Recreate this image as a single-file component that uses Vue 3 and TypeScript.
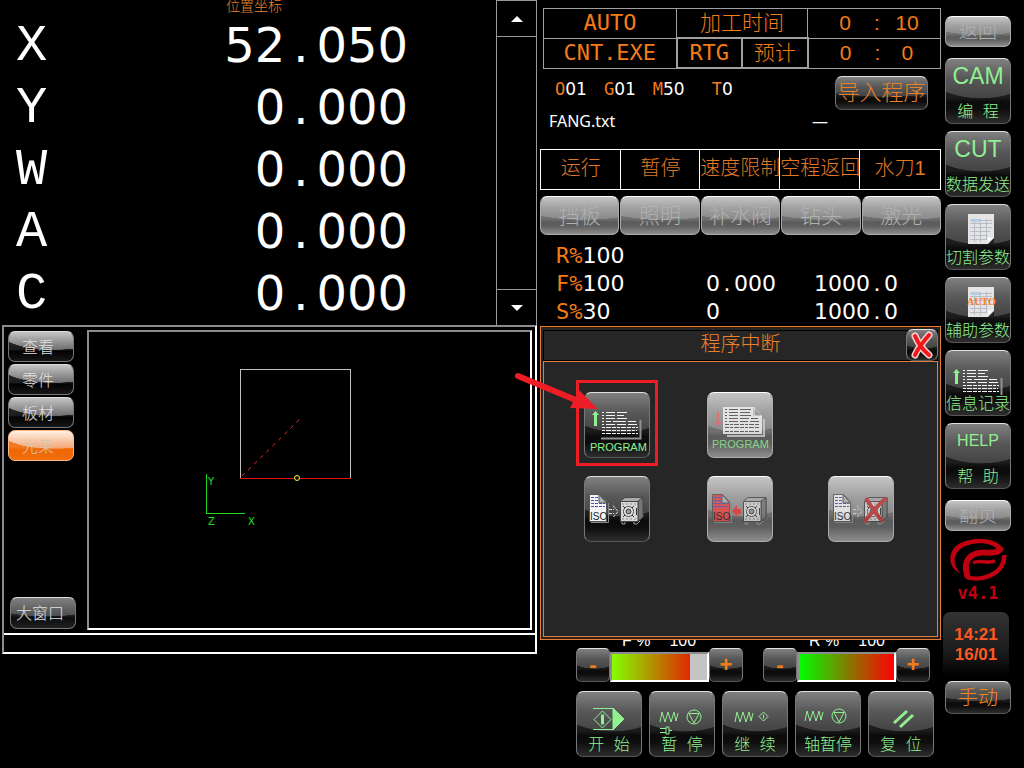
<script setup lang="ts">
interface Axis { name: string; whole: string; frac: string }
interface SideKey { id: string; label: string; title?: string; icon?: string }

const axes: Axis[] = [
  { name: 'X', whole: '52', frac: '050' },
  { name: 'Y', whole: '0', frac: '000' },
  { name: 'W', whole: '0', frac: '000' },
  { name: 'A', whole: '0', frac: '000' },
  { name: 'C', whole: '0', frac: '000' },
]

const codes = [
  { letter: 'O', value: '01' },
  { letter: 'G', value: '01' },
  { letter: 'M', value: '50' },
  { letter: 'T', value: '0' },
]

const states = ['运行', '暂停', '速度限制', '空程返回', '水刀1']
const outputs = ['挡板', '照明', '补水阀', '钻头', '激光']

const rates = [
  { key: 'R%', value: '100', actual: [] as string[], target: [] as string[] },
  { key: 'F%', value: '100', actual: ['0', '000'], target: ['1000', '0'] },
  { key: 'S%', value: '30', actual: ['0'], target: ['1000', '0'] },
]

const tabs = ['查看', '零件', '板材', '光束']
const activeTab = '光束'

const sideTop: SideKey[] = [
  { id: 'cam', label: '编 程', title: 'CAM' },
  { id: 'cut', label: '数据发送', title: 'CUT' },
  { id: 'cutpar', label: '切割参数', icon: 'sheet' },
  { id: 'auxpar', label: '辅助参数', icon: 'auto' },
  { id: 'log', label: '信息记录', icon: 'list' },
  { id: 'help', label: '帮 助', title: 'HELP' },
]

const overrides = [
  { key: 'F %', value: '100', fill: 82, tone: 'feed' },
  { key: 'R %', value: '100', fill: 100, tone: 'rapid' },
]

const actions = [
  { id: 'start', label: '开 始' },
  { id: 'pause', label: '暂 停' },
  { id: 'resume', label: '继 续' },
  { id: 'axis', label: '轴暂停' },
  { id: 'reset', label: '复 位' },
]

const isoKeys = [
  { id: 'store', disabled: false },
  { id: 'fetch', disabled: true },
  { id: 'erase', disabled: true },
]
</script>

<template>
  <main class="screen">
    <section class="left">
      <div class="position">
        <div class="readout">
          <h2>位置坐标</h2>
          <dl>
            <div v-for="a in axes" :key="a.name" class="axis">
              <dt>{{ a.name }}</dt>
              <dd>{{ a.whole }}<span class="point">.</span>{{ a.frac }}</dd>
            </div>
          </dl>
        </div>
        <div class="scroller">
          <button type="button" aria-label="上">
            <svg width="14" height="8"><path d="M7 1L13 7H1Z" fill="#fff" /></svg>
          </button>
          <div class="track"></div>
          <button type="button" aria-label="下">
            <svg width="14" height="8"><path d="M1 1H13L7 7Z" fill="#fff" /></svg>
          </button>
        </div>
      </div>

      <div class="cad">
        <div class="cad-main">
          <nav class="tabs">
            <button v-for="t in tabs" :key="t" type="button" class="tab" :class="{ active: t === activeTab }">{{ t }}</button>
            <button type="button" class="tab big">大窗口</button>
          </nav>
          <svg class="plot" width="100%" height="100%">
            <g fill="none" shape-rendering="crispEdges">
              <path d="M151.500 146V37.500H261.500V146" stroke="#c0c0c0" />
              <path d="M151 146.500H262" stroke="#e01010" />
              <path d="M117.500 142V181.500H156" stroke="#20d820" />
            </g>
            <path d="M153 144L211 87" fill="none" stroke="#d83020" stroke-dasharray="4 4.500" />
            <circle cx="208" cy="146" r="2.500" fill="#111" stroke="#f0f040" />
            <g class="axis-names">
              <text x="119" y="153">Y</text>
              <text x="119" y="193">Z</text>
              <text x="159" y="193">X</text>
            </g>
          </svg>
        </div>
        <div class="cad-status"></div>
      </div>
    </section>

    <section class="middle">
      <table class="info">
        <colgroup><col class="wide" /><col /><col /><col class="wide" /></colgroup>
        <tbody>
          <tr>
            <td class="mono">AUTO</td>
            <td colspan="2">加工时间</td>
            <td><div class="clock"><span>0</span><span>:</span><span>10</span></div></td>
          </tr>
          <tr>
            <td class="mono">CNT.EXE</td>
            <td class="mono thick">RTG</td>
            <td class="thick">预计</td>
            <td><div class="clock"><span>0</span><span>:</span><span>0</span></div></td>
          </tr>
        </tbody>
      </table>

      <div class="codes">
        <div class="code-list">
          <span v-for="c in codes" :key="c.letter"><b>{{ c.letter }}</b>{{ c.value }}</span>
        </div>
        <button type="button" class="key import">导入程序</button>
      </div>
      <div class="file"><span>FANG.txt</span><span>—</span></div>

      <ul class="states">
        <li v-for="s in states" :key="s">{{ s }}</li>
      </ul>
      <div class="outputs">
        <button v-for="o in outputs" :key="o" type="button" class="key off" disabled>{{ o }}</button>
      </div>

      <table class="rates">
        <tbody>
          <tr v-for="r in rates" :key="r.key">
            <th scope="row"><b>{{ r.key }}</b>{{ r.value }}</th>
            <td><template v-for="(p, i) in r.actual" :key="i"><span v-if="i" class="point">.</span>{{ p }}</template></td>
            <td><template v-for="(p, i) in r.target" :key="i"><span v-if="i" class="point">.</span>{{ p }}</template></td>
          </tr>
        </tbody>
      </table>

      <div class="dialog">
        <header>
          <h1>程序中断</h1>
          <button type="button" class="key close" aria-label="关闭">
            <svg width="30" height="30" viewBox="0 0 30 30" fill="none" stroke-linecap="round">
              <path d="M8 6C11 13 16 20 22 25M22 5C16 12 11 18 8 25" stroke="#f6cccc" stroke-width="7" />
              <path d="M8 6C11 13 16 20 22 25M22 5C16 12 11 18 8 25" stroke="#f01818" stroke-width="4" />
            </svg>
          </button>
        </header>
        <div class="dialog-body">
          <div class="marked">
            <button type="button" class="key tile">
              <svg class="icon" viewBox="0 0 64 64">
                <path d="M9 33V22H7l3.500-4 3.500 4h-2V33Z" fill="#90f090" />
                <path d="M16 45.500H55.500V27" fill="none" stroke="#909090" stroke-width="2" />
                <g stroke="#f4f4f4" fill="none" shape-rendering="crispEdges">
                  <path d="M17 19.500h2m2 0h9m2 0h10M17 22.500h2m2 0h9m2 0h7M17 25.500h2m2 0h9m2 0h10M17 28.500h2m2 0h5m2 0h13m2 0h8M17 31.500h2m2 0h9m2 0h9m2 0h9" />
                  <path d="M17 34.500h36M17 37.500h35M17 40.500h36" stroke-dasharray="3 1 5 1 4 1" />
                </g>
                <text x="5" y="58" class="program">PROGRAM</text>
              </svg>
            </button>
            <svg class="pointer" width="90" height="50" viewBox="0 0 90 50">
              <path d="M5 8L70 35" stroke="#ee1c24" stroke-width="6" stroke-linecap="round" />
              <path d="M66 22L85 41L57 40Z" fill="#ee1c24" />
            </svg>
          </div>
          <button type="button" class="key tile off" disabled>
            <svg class="icon" viewBox="0 0 64 64">
              <path d="M9 19h2V29h3l-4 4-4-4h3Z" fill="#f06868" />
              <path d="M19 43H56V26" fill="none" stroke="#d0d0d0" stroke-width="2" />
              <path d="M15 14H46L54 23V41H15Z" fill="#f4f4f4" />
              <path d="M45 14V23H54Z" fill="#9a9a9a" />
              <path d="M46 14V23H54" fill="none" stroke="#fff" />
              <g stroke="#555" fill="none" shape-rendering="crispEdges">
                <path d="M17 16.500h2m2 0h9m2 0h11M17 19.500h2m2 0h9m2 0h10M17 22.500h2m2 0h9m2 0h11M17 25.500h2m2 0h9m2 0h9m2 0h7M17 28.500h2m2 0h9m2 0h8m2 0h9" />
                <path d="M17 31.500h35M17 34.500h35M17 38.500h35" stroke-dasharray="4 1 3 1 5 1" />
              </g>
              <text x="4" y="55" class="program">PROGRAM</text>
            </svg>
          </button>
          <span class="blank"></span>
          <button v-for="k in isoKeys" :key="k.id" type="button" class="key tile" :class="{ off: k.disabled }" :disabled="k.disabled">
            <svg class="icon" viewBox="0 0 64 64" :class="k.id">
              <path d="M6 45.500H23.500V26" fill="none" stroke="#888" />
              <path class="page" d="M4.500 17.500H14.500L21.500 25V44.500H4.500Z" stroke="#555" />
              <path d="M14 17.500V26H21.500Z" fill="#b4b4b4" stroke="#555" />
              <path d="M6 20.500h7M6 23.500h7M6 26.500h14M6 29.500h14" stroke="#5050a8" stroke-dasharray="3 1" />
              <text x="5" y="43" class="iso">ISO</text>
              <path v-if="k.id === 'fetch'" d="M24 34L29 28V32H33V37H29V40Z" fill="#e83838" />
              <path v-else d="M24 32.500h5M24 36.500h5M28 28.500l5 6-5 6" fill="none" stroke="#ddd" stroke-dasharray="3 1" />
              <path d="M37 45v2h3v-2M49 45v2h3l3-3" fill="none" stroke="#999" />
              <path d="M35.500 24L40 20.500H58V40L53 44Z" fill="#aaa" stroke="#4a4a4a" />
              <path d="M53 24L58 20.500V40L53 44Z" fill="#777" stroke="#444" />
              <path d="M35.500 24.500H53V44.500H35.500Z" fill="#d6d6d6" stroke="#444" />
              <path d="M37.500 27h14M37.500 42h14" stroke="#444" stroke-dasharray="1 3" />
              <circle cx="43.500" cy="34.500" r="5" fill="#eee" stroke="#444" />
              <circle cx="43.500" cy="34.500" r="2.500" fill="#999" stroke="#333" />
              <path d="M38 29l2 2M49 29l-2 2M38 40l2-2M49 40l-2-2M51.500 31v7" stroke="#333" />
              <path v-if="k.id === 'erase'" d="M37 21C42 30 49 39 53 44M57 21C48 29 40 39 35 45" fill="none" stroke="#c03838" stroke-width="4" />
            </svg>
          </button>
        </div>
      </div>

      <div class="overrides">
        <div v-for="o in overrides" :key="o.key" class="override">
          <div class="override-name"><span>{{ o.key }}</span><span>{{ o.value }}</span></div>
          <div class="override-row">
            <button type="button" class="key step">-</button>
            <div class="meter"><div :class="o.tone" :style="{ width: o.fill + '%' }"></div></div>
            <button type="button" class="key step">+</button>
          </div>
        </div>
      </div>

      <div class="actions">
        <button v-for="a in actions" :key="a.id" type="button" class="key tile">
          <svg class="icon green" viewBox="0 0 64 64">
            <template v-if="a.id === 'start'">
              <path d="M16 16.500H36M16 37.500H36" />
              <path d="M36 16L47 27L36 38Z" fill="#90f090" />
              <path d="M25.500 19L34 27.500L25.500 36L17 27.500Z" />
              <path d="M24 22.500h3v10h-3Z" fill="#90f090" stroke="none" />
            </template>
            <template v-else-if="a.id === 'pause'">
              <path d="M10 30L12 20L15 30L18 20L21 30L24 20L26 29L28 21" />
              <circle cx="44" cy="25" r="7" /><path d="M39 21.500H49L44 31Z" />
              <path d="M10 36.500h6M10 40.500h6M16 35v7h3v-7ZM19 38.500h3" />
            </template>
            <template v-else-if="a.id === 'resume'">
              <path d="M12 30L14 20L17 30L20 20L23 30L26 20L28 29L30 21" />
              <path d="M40.500 20L45 24.500L40.500 29L36 24.500ZM40.500 22.500v4" />
            </template>
            <template v-else-if="a.id === 'axis'">
              <path d="M9 29L11 19L14 29L17 19L20 29L23 19L25 28L27 20" />
              <circle cx="43" cy="24" r="7" /><path d="M38 20.500H48L43 30Z" />
            </template>
            <path v-else d="M25 31L38 19M31 35L44 23" stroke-width="3" />
          </svg>
          <span class="label">{{ a.label }}</span>
        </button>
      </div>
    </section>

    <aside class="side">
      <button type="button" class="key flat off" disabled>返回</button>
      <div class="side-keys">
        <button v-for="s in sideTop" :key="s.id" type="button" class="key tile" :class="s.id">
          <span v-if="s.title" class="title">{{ s.title }}</span>
          <svg v-else-if="s.icon === 'list'" class="icon" viewBox="0 0 64 64">
            <path d="M9 33V22H7l3.500-4 3.500 4h-2V33Z" fill="#90f090" />
            <path d="M55.500 27V44" fill="none" stroke="#909090" stroke-width="2" />
            <g stroke="#f4f4f4" fill="none" shape-rendering="crispEdges">
              <path d="M17 19.500h2m2 0h9m2 0h10M17 22.500h2m2 0h9m2 0h7M17 25.500h2m2 0h9m2 0h10M17 28.500h2m2 0h5m2 0h13m2 0h8M17 31.500h2m2 0h9m2 0h9m2 0h9" />
              <path d="M17 34.500h36M17 37.500h35M17 40.500h36" stroke-dasharray="3 1 5 1 4 1" />
            </g>
          </svg>
          <svg v-else class="icon" viewBox="0 0 64 64">
            <path d="M22 9H48V34L43 39H22Z" fill="#e4e4e4" />
            <path d="M24 15.500H46M24 18.500H46M24 22.500H46M24 26.500H44M24 30.500H42M24 34.500H41M28.500 14V37M34.500 14V37M40.500 14V34" stroke="#b8bcc4" fill="none" />
            <path d="M25 14h9v3h-9Z" fill="#b4cce8" />
            <path d="M48 31L40 39C43 36 42 34 42 32C44 33 46 33 48 31Z" fill="#fff" />
            <path d="M48 33V39H42Z" fill="#222" />
            <text v-if="s.icon === 'auto'" x="21" y="27" class="auto">AUTO</text>
          </svg>
          <span class="label">{{ s.label }}</span>
        </button>
      </div>
      <button type="button" class="key flat off" disabled>翻页</button>
      <div class="brand">
        <svg width="58" height="44" viewBox="14 12 174 132" fill="none" stroke="#c00010">
          <path d="M48 120C6 104 8 46 54 28C96 10 156 14 178 48L162 52C144 28 98 24 62 40C22 58 24 98 48 120Z" fill="#c00010" stroke="none" />
          <path d="M70 132C60 100 62 76 90 64C112 54 128 62 150 58C162 56 168 52 170 44" stroke-width="18" />
          <path d="M66 132C110 146 180 126 180 66" stroke-width="13" />
          <path d="M86 90C108 78 122 94 152 84" stroke-width="11" />
        </svg>
        <span>v4.1</span>
      </div>
      <div class="time"><span>14:21</span><span>16/01</span></div>
      <button type="button" class="key flat manual">手动</button>
    </aside>
  </main>
</template>

<style>
body {
  margin: 0;
  background: #000;
}
</style>

<style scoped>
.screen {
  display: grid;
  grid-template-columns: minmax(0, 1fr) 401px 83px;
  align-items: start;
  min-height: 100vh;
  background: #000;
  color: #fff;
  font-family: "Liberation Sans", "Noto Sans CJK SC", sans-serif;
  font-weight: 300;
}
h1, h2, dl, dd, ul { margin: 0; padding: 0; font-weight: 300; }
button { margin: 0; padding: 0; font: inherit; color: inherit; }
svg { display: block; }
.left { padding-right: 3px; }
.point { display: inline-block; text-align: center; }

.position { display: flex; height: 325px; }
.readout { flex: 1; padding: 0 88px 0 16px; }
.readout h2 {
  padding-left: 84px;
  text-align: center;
  font-size: 14px;
  line-height: 13px;
  color: #e8842c;
}
.axis {
  display: flex;
  justify-content: space-between;
  height: 62px;
  line-height: 64px;
  font-weight: 400;
}
.axis dt { font-family: "Liberation Mono", monospace; font-size: 52px; line-height: 68px; }
.axis dd { font-family: "DejaVu Sans", sans-serif; font-size: 48px; font-weight: 400; }
.axis .point { width: 31px; }
.scroller {
  display: flex;
  flex-direction: column;
  width: 39px;
  border: 1px solid #999;
  border-bottom: 0;
}
.scroller button {
  display: flex;
  align-items: center;
  justify-content: center;
  height: 35px;
  background: #000;
  border: 0;
}
.track { flex: 1; border: 1px solid #999; border-width: 1px 0; }

.cad {
  margin-left: 2px;
  border: 2px solid;
  border-color: #8c8c8c #fff #fff #8c8c8c;
}
.cad-main {
  display: flex;
  height: 300px;
  padding: 3px 3px 3px 4px;
  border-bottom: 2px solid #fff;
}
.cad-status { height: 17px; }
.tabs { display: flex; flex-direction: column; gap: 2px; width: 79px; padding: 1px 0; }
.tab {
  width: 66px;
  height: 31px;
  padding: 0 6px 2px 0;
  border: 1px solid #777;
  border-top-color: #ddd;
  border-radius: 7px;
  font-size: 16px;
  color: #e0e0e0;
  background:
    radial-gradient(ellipse 85% 62% at 70% 0, transparent 98%, rgba(0, 0, 0, 0.75) 100%),
    linear-gradient(#c4c4c4, #707070 60%, #0a0a0a 66%, #555);
}
.tab.active {
  border-color: #f8b888;
  color: #d8c8b0;
  background:
    radial-gradient(ellipse 85% 62% at 70% 0, transparent 98%, rgba(240, 100, 0, 0.75) 100%),
    linear-gradient(#fff0e4, #f4a878 58%, #f07010 64%, #f88830);
}
.tab.big {
  margin: auto 0 0 2px;
  height: 32px;
  background:
    radial-gradient(ellipse 100% 62% at 55% 0, transparent 98%, rgba(0, 0, 0, 0.6) 100%),
    linear-gradient(#808080, #505050 58%, #1c1c1c 66%, #555);
}
.plot {
  flex: 1;
  min-width: 0;
  box-sizing: border-box;
  border: 2px solid;
  border-color: #8c8c8c #fff #fff #8c8c8c;
}
.axis-names { fill: #20e020; font: 10px "DejaVu Sans", sans-serif; }

.key {
  border: 1px solid #777;
  border-top-color: #e0e0e0;
  border-bottom-color: #555;
  border-radius: 7px;
  background:
    radial-gradient(ellipse 100% 62% at 55% 0, transparent 98%, rgba(0, 0, 0, 0.6) 100%),
    linear-gradient(#808080, #585858 30%, #444 60%, #1c1c1c 68%, #202020 78%, #707070);
}
.key.off {
  border-color: #aaa;
  border-top-color: #fff;
  background:
    radial-gradient(ellipse 100% 62% at 55% 0, transparent 98%, rgba(0, 0, 0, 0.2) 100%),
    linear-gradient(#c4c4c4, #a0a0a0 30%, #8a8a8a 60%, #727272 68%, #767676 78%, #b0b0b0);
  color: #b0b0b0;
}
.tile { display: grid; width: 66px; height: 66px; }
.tile > * { grid-area: 1 / 1; }
.icon { width: 64px; height: 64px; }
.label {
  align-self: end;
  justify-self: center;
  font-family: "Liberation Mono", "Noto Sans CJK SC", sans-serif;
  font-size: 16px;
  line-height: 20px;
  white-space: nowrap;
  color: #90f090;
}

.middle { padding-top: 8px; }
.info {
  width: 398px;
  margin-left: 3px;
  table-layout: fixed;
  border-collapse: collapse;
  text-align: center;
  font-size: 21px;
  color: #f47c18;
}
.info .wide { width: 133px; }
.info td { height: 28px; padding: 0; border: 1px solid #a0a0a0; line-height: 28px; }
.info .thick { border-width: 2px; }
.mono { font-family: "DejaVu Sans Mono", monospace; font-size: 22px; font-weight: 400; }
.clock { display: grid; grid-template-columns: 58px 6px 1fr; padding: 0 6px 0 8px; }

.codes { display: flex; justify-content: space-between; padding: 7px 13px 0 15px; }
.code-list { display: flex; gap: 17px; font: 17px/26px "DejaVu Sans", sans-serif; }
.code-list span:last-child { margin-left: 10px; }
.code-list b { font: 17px/20px "DejaVu Sans Mono", monospace; color: #f47c18; }
.import {
  display: flex;
  justify-content: center;
  width: 93px;
  height: 34px;
  font-size: 22px;
  line-height: 32px;
  white-space: nowrap;
  color: #e8802c;
}
.file {
  display: flex;
  justify-content: space-between;
  padding: 0 113px 0 9px;
  font: 16px/22px "Noto Sans", sans-serif;
}
.states {
  display: grid;
  grid-template-columns: repeat(5, 1fr);
  margin-top: 17px;
  border: 1px solid #fff;
  list-style: none;
  font-size: 20px;
  line-height: 36px;
  color: #e07828;
}
.states li {
  display: flex;
  justify-content: center;
  height: 39px;
  white-space: nowrap;
}
.states li + li { box-shadow: -1px 0 #fff; }
.outputs { display: grid; grid-template-columns: repeat(5, 1fr); gap: 1px; margin-top: 6px; }
.outputs .key { height: 39px; font-size: 21px; line-height: 30px; }

.rates {
  width: 366px;
  margin: 7px 0 0 16px;
  table-layout: fixed;
  border-collapse: collapse;
  text-align: left;
  font: 22px/28px "DejaVu Sans", sans-serif;
}
.rates th, .rates td { height: 28px; padding: 0; font-weight: 400; }
.rates th { width: 150px; }
.rates td { width: 108px; }
.rates b { font: 22px/24px "DejaVu Sans Mono", monospace; color: #f47c18; }
.rates .point { width: 14px; }

.dialog {
  position: relative;
  z-index: 1;
  border: 1px solid #e08040;
  outline: 1px solid #401800;
  outline-offset: -2px;
  background: #262626;
  padding: 2px;
}
.dialog header {
  display: flex;
  align-items: center;
  height: 32px;
}
.dialog h1 {
  flex: 1;
  height: 29px;
  margin-right: -32px;
  border: 1px solid #000;
  text-align: center;
  font-size: 20px;
  line-height: 26px;
  color: #f08028;
}
.close { display: grid; place-items: center; width: 32px; height: 32px; }
.dialog-body {
  display: grid;
  grid-template-columns: 123px 121px 66px;
  grid-auto-rows: 84px;
  height: 244px;
  padding: 30px 0 0 40px;
  border: 1px solid #e08040;
}
.marked { position: relative; width: 66px; }
.marked::before {
  content: "";
  position: absolute;
  left: -8px;
  top: -12px;
  width: 76px;
  height: 80px;
  border: 3px solid #ee1c24;
}
.pointer { position: absolute; left: -71px; top: -24px; }
.program { font: 11px "Liberation Sans", sans-serif; fill: #90f090; }
.iso { font: 10px "Liberation Sans", sans-serif; fill: #222; }
.auto { font: bold 10px "Liberation Serif", serif; fill: #ff7820; }
.page { fill: #f4f4f4; }
.off .icon { opacity: 0.8; }
.fetch .page { fill: #e84848; }

.overrides {
  display: flex;
  gap: 20px;
  margin-top: -9px;
  padding-left: 36px;
}
.override { width: 167px; }
.override-name { display: flex; gap: 19px; padding-left: 46px; font-size: 16px; line-height: 19px; height: 16px; }
.override-row { display: flex; align-items: center; }
.step { width: 34px; height: 34px; font-size: 22px; line-height: 24px; font-weight: 700; color: #f47c18; border-radius: 5px; }
.meter {
  flex: 1;
  height: 26px;
  margin-top: 5px;
  border: 2px solid;
  border-color: #8c8c8c #fff #fff #8c8c8c;
  background: #c4c4c4;
}
.meter div { height: 100%; }
.feed { background: linear-gradient(90deg, #84ff00, #e02800); }
.rapid { background: linear-gradient(90deg, #00ff00, #ff0000); }

.actions { display: flex; gap: 7px; margin-top: 9px; padding-left: 36px; }
.green { fill: none; stroke: #90f090; }

.side {
  display: flex;
  flex-direction: column;
  padding: 16px 0 0 4px;
}
.flat { width: 66px; height: 31px; font-size: 19px; line-height: 24px; }
.side-keys { display: flex; flex-direction: column; gap: 7px; margin: 11px 0; }
.title { justify-self: center; font-size: 23px; line-height: 34px; color: #90f090; }
.help .title { font-size: 16px; }
.brand { display: flex; flex-direction: column; align-items: center; width: 66px; margin-top: 6px; }
.brand span { margin-top: 2px; font: bold 17px/20px "DejaVu Sans Mono", monospace; color: #c00010; }
.time {
  display: flex;
  flex-direction: column;
  align-items: center;
  width: 66px;
  height: 52px;
  margin: 9px 0 4px -2px;
  padding-top: 13px;
  border-radius: 7px 7px 0 0;
  background: linear-gradient(#333, #1c1c1c 60%, #000);
  font-size: 17px;
  line-height: 20px;
  font-weight: 700;
  color: #ff5820;
}
.manual { height: 33px; font-size: 20px; color: #f88818; }
</style>
